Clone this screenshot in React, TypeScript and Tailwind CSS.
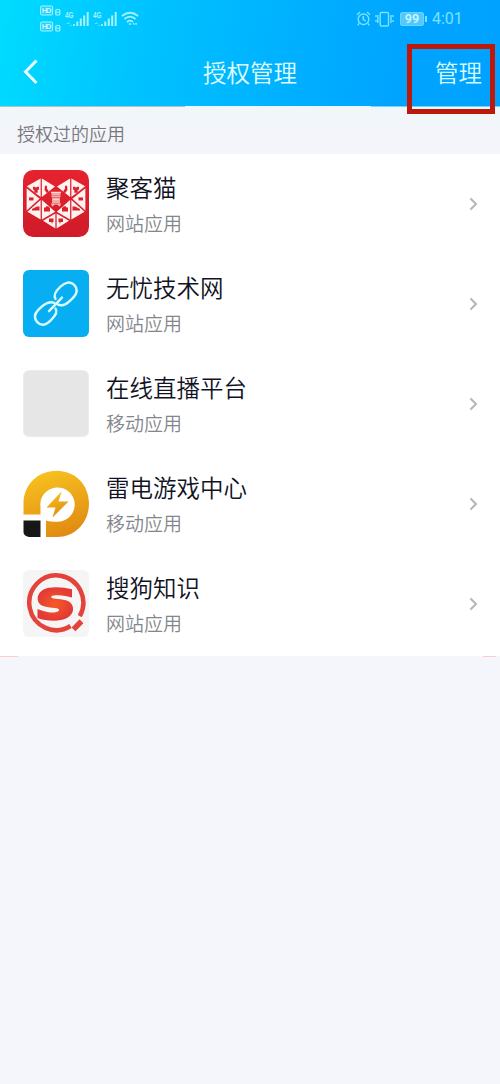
import type { ReactNode } from "react";

function HeartIcon() {
  const half = (
    <g>
      <path d="M3.800 16 17.600 8.400V26.600Z" />
      <path d="M18.900 8.400 32 16.200 18.900 26.600Z" />
      <path d="M3.600 18V39.800L16.600 28.400Z" />
      <path d="M4.400 41.200 17.600 29.600V48.800Z" />
      <path d="M18.900 29.600 32.200 41.200 18.900 48.800Z" />
      <path d="M20 50 32.400 42.800V57.600Z" />
      <g fill="#d8222c">
        <path d="M10 16.500h2l1 1 1-1h2v3h-1.300v3h-3.400v-3H10Z" />
        <path d="M22 15.500h2v3l1.500 2v2h-2l-2-3Z" />
        <path d="M6 27h4.500v3H6Z" />
        <path d="M9 38.500l5-2.500h2.500v4H9Z" />
        <path d="M21 37h1.500l.8-1.200h2l.8 1.200H27v4h-6Z" />
        <path d="M26 47.800h4.500v3.400h-1v1.300h-1v-1.300H26Z" />
      </g>
    </g>
  );
  return (
    <svg viewBox="0 0 66 66" preserveAspectRatio="none" className="h-[67px] w-[66px]">
      <defs>
        <linearGradient id="heartBg" x1="0" y1="0" x2="0" y2="1">
          <stop offset="0" stopColor="#e6232e" />
          <stop offset="1" stopColor="#cf1b29" />
        </linearGradient>
      </defs>
      <rect width="66" height="66" rx="10" fill="url(#heartBg)" />
      <g fill="#fff1ef">
        {half}
        <g transform="translate(66 0) scale(-1 1)">{half}</g>
      </g>
      <path d="M28.500 22.500h9v2.500h-9ZM29 27h8v5.500h-8Z" fill="#f3aaa6" />
      <path d="M28 22h10M28.500 25.800h9M28 33.500h10M30.500 29h5M29 35.500l2-2M37 35.500l-2-2" fill="none" stroke="#fbdad7" strokeWidth="1.100" />
    </svg>
  );
}

function LinkIcon() {
  return (
    <svg viewBox="0 0 66 66" preserveAspectRatio="none" className="h-[67px] w-[66px]">
      <rect width="66" height="66" rx="6" fill="#08aef2" />
      <g fill="none" stroke="#d9fbff" strokeWidth="2.400" strokeLinecap="round">
        <path d="M32.500 28.500C29.500 24 34 19.500 37.500 16.300C42 12 47.500 10.800 51 14.500C55.500 19 54 23.500 50 27.500C45 32.500 40.500 36.500 34.500 33.800" />
        <path d="M32.500 38C35.500 42 31 46.500 28 49.300C23.500 53.800 18.500 55.500 14.500 51.500C10.500 47.500 11.500 43 15.500 39C20 34.300 25.500 29.600 31.500 32.500" />
        <path d="M26 40.500 39 27.200" />
      </g>
    </svg>
  );
}

function BlankIcon() {
  return <div className="h-[67px] w-[66px] rounded-md border border-[#ececec] bg-[#e6e6e6]" />;
}

function ThunderIcon() {
  return (
    <svg viewBox="0 0 66 67" className="h-[67px] w-[66px]">
      <defs>
        <linearGradient id="thunder" x1="0.2" y1="0" x2="0.5" y2="1">
          <stop offset="0" stopColor="#f8c320" />
          <stop offset="1" stopColor="#e18b12" />
        </linearGradient>
      </defs>
      <path
        fill="url(#thunder)"
        d="M.5 44.500V33.500C.5 14.500 15 .7 33.500 .7S66 14.500 66 33.500 52 67 34.500 67H23V50.500C27 51.700 30 51.800 34 51.800A17.200 17.200 0 1 0 17.500 37V44.500Z"
      />
      <path fill="url(#thunder)" d="M38.500 21.500 23.500 37.500H32.500L29.500 47.500 45.500 31.500H35.500Z" />
      <path fill="#171717" d="M.5 50.500H17.500V67H6Q.5 66 .5 62Z" />
    </svg>
  );
}

function SogouIcon() {
  return (
    <svg viewBox="0 0 66 66" preserveAspectRatio="none" className="h-[67px] w-[66px]">
      <defs>
        <radialGradient id="sogou">
          <stop offset="0" stopColor="#f65a28" />
          <stop offset="1" stopColor="#e33a35" />
        </radialGradient>
      </defs>
      <rect width="66" height="66" rx="6" fill="#f5f5f6" />
      <path d="M47.500 55.200A27 27 0 1 1 56.800 45.500" fill="none" stroke="#e3433b" strokeWidth="4.500" />
      <path d="M50.500 58.500 58.500 50.500" stroke="#e3433b" strokeWidth="5.500" />
      <path
        d="M49 19C42 17.300 33 16.300 26 17.500C13.500 19.500 11.500 31.500 19.500 35.300C25 37.800 35 36.800 36 39C36.500 41.500 32 42.300 27 41.800C22 41.300 18 40 14.500 38.500V47.300C21 49.800 31 50.600 38 49.300C51.500 47 53.500 35 45 30.500C39.500 27.800 29.500 29 28.300 27C27.800 25.200 31 24.600 35 24.800C40 25 45 25.800 49 27Z"
        fill="url(#sogou)"
      />
    </svg>
  );
}

function Signal() {
  return (
    <svg viewBox="0 0 25 18" className="h-[18px] w-[25px]" fill="#a5f3ff">
      <text x="0" y="8" fontSize="9.500" fontWeight="700" fontFamily="Liberation Sans" textLength="8.500" lengthAdjust="spacingAndGlyphs">
        4G
      </text>
      <path d="M8 14h1.700v2H8ZM11.300 11.500h2v4.500h-2ZM14.800 8.500h2v7.500h-2ZM18.200 5.500h2v10.500h-2ZM21.700 2h2V16h-2Z" />
      <path d="M1.500 13.500h3M3 12l1.500 1.500M5 15.500H7" stroke="#6be0ff" strokeWidth="0.8" />
    </svg>
  );
}

function HdBadges() {
  return (
    <svg viewBox="0 0 22 28" className="h-7 w-[22px]" fontFamily="Liberation Sans" fontWeight="700">
      {[1, 17].map((y) => (
        <g key={y}>
          <rect x="0.6" y={y} width="12" height="9" rx="1" fill="#2bd2ff" stroke="#a5f3ff" />
          <text x="1.700" y={y + 7.200} fontSize="7.500" fill="#c2f8ff" textLength="9.800">
            HD
          </text>
          <rect x="15.800" y={y + 3.500} width="4" height="5.500" rx="1" fill="none" stroke="#a5f3ff" strokeWidth="1.200" />
          <path d={"M16 " + (y + 6.200) + "h3.500"} stroke="#a5f3ff" strokeWidth="1" />
        </g>
      ))}
    </svg>
  );
}

function StatusBar() {
  return (
    <div className="flex h-[38px] items-start justify-between pl-10 pr-9">
      <div className="flex items-start">
        <div className="pt-[5px]">
          <HdBadges />
        </div>
        <div className="flex gap-[3px] pl-[3px] pt-[10px]">
          <Signal />
          <Signal />
        </div>
        <svg viewBox="0 0 18 15" className="ml-[3px] mt-[11px] h-[15px] w-[18px]" fill="none" stroke="#a5f3ff" strokeWidth="1.700">
          <path d="M1 5Q9-1.500 17 5M3.500 8Q9 3.300 14.500 8M6 11Q9 8.300 12 11" />
          <path d="M7.800 13h2.400M12 12.800h1.300M14.300 12.800h1.500" />
        </svg>
      </div>
      <div className="flex items-start pt-[9px]">
        <svg viewBox="0 0 16 18" className="mt-px h-[18px] w-4" fill="none" stroke="#79e3ff" strokeWidth="1.400">
          <circle cx="7.500" cy="9.300" r="5.300" />
          <path d="M7.300 6v3.500l2.500 1.500M1 4.800 4 2M11 2l3 2.800M3 13.500l-1.300 1.800M12 13.500l1.300 1.800" />
        </svg>
        <svg viewBox="0 0 20 18" className="ml-[3px] mt-px h-[18px] w-5" fill="none" stroke="#79e3ff" strokeWidth="1.400">
          <rect x="5.200" y="2.500" width="8.300" height="13.500" rx="1.200" />
          <path d="M2.800 5v8M1 5v2M1 10v2M16 5v8M18 5v2M18 10v2" />
        </svg>
        <div className="ml-[5px] mt-[3px] flex h-[14px] w-6 items-center justify-center rounded-[2px] border border-[#65d6ff] bg-[#52c8ff] font-['Roboto'] text-[12.500px] font-semibold leading-none text-[#c8f7ff]">
          99
        </div>
        <div className="ml-px mt-[7px] h-[6px] w-[2px] bg-[#79e3ff]" />
        <div className="ml-[5px] w-8 whitespace-nowrap font-['Roboto'] text-[16px] font-normal leading-5 text-[#79e3ff]">4:01</div>
      </div>
    </div>
  );
}

interface AppRow {
  name: string;
  kind: string;
  icon: ReactNode;
}

const apps: AppRow[] = [
  { name: "聚客猫", kind: "网站应用", icon: <HeartIcon /> },
  { name: "无忧技术网", kind: "网站应用", icon: <LinkIcon /> },
  { name: "在线直播平台", kind: "移动应用", icon: <BlankIcon /> },
  { name: "雷电游戏中心", kind: "移动应用", icon: <ThunderIcon /> },
  { name: "搜狗知识", kind: "网站应用", icon: <SogouIcon /> },
];

export default function App() {
  return (
    <div className="flex h-[1084px] w-[500px] flex-col overflow-hidden bg-[#f4f6fb] font-['Noto_Sans_CJK_SC',sans-serif] font-[350]">
      <header className="h-[107px] shrink-0 bg-[linear-gradient(100deg,#00dcff_0%,#00c3ff_28%,#00afff_60%,#00a4ff_80%,#00a2ff_100%)]">
        <StatusBar />
        <div className="grid h-[68px] grid-cols-[1fr_auto_1fr] items-center">
          <svg viewBox="0 0 16 26" className="ml-[23px] h-[26px] w-4" fill="none" stroke="#eaffff" strokeWidth="3">
            <path d="M13.500 1.500 2.500 12.700 13.500 24" />
          </svg>
          <h1 className="text-[23.500px] leading-8 text-[#e0ffff]">授权管理</h1>
          <div className="relative justify-self-end pr-[18px] text-[23.500px] leading-8 text-[#d4fcff]">
            管理
            <div className="absolute -top-[12px] right-[5px] h-[70px] w-[88px] border-[5px] border-[#bd1809]" />
          </div>
        </div>
        <div className="flex h-px">
          <div className="w-[185px] bg-[#b9bccf]" />
          <div className="w-[186px] bg-[#eef8fc]" />
          <div className="flex-1 bg-[#74d3fb]" />
        </div>
      </header>
      <div className="h-[47px] shrink-0 bg-[linear-gradient(#f0f7f9,#f3f5fa_60%)] pl-[17px] pt-[13px] text-[18px] leading-[26px] text-[#77777b]">
        授权过的应用
      </div>
      <main className="flex h-[502px] shrink-0 flex-col bg-white">
        {apps.map((app) => (
          <div key={app.name} className="flex h-[100px] shrink-0 items-start pl-[23px] pr-[22px] pt-4">
            {app.icon}
            <div className="-mt-px ml-[17px] flex-1">
              <div className="text-[23.500px] leading-9 text-[#11131f]">{app.name}</div>
              <div className="text-[19px] leading-9 text-[#85868c]">{app.kind}</div>
            </div>
            <svg viewBox="0 0 9 14" className="mt-[27px] h-[14px] w-[9px]" fill="none" stroke="#b5b5b8" strokeWidth="2">
              <path d="M1.500 1.500 7 7 1.500 12.500" />
            </svg>
          </div>
        ))}
      </main>
      <div className="flex h-px shrink-0 justify-between">
        <div className="w-[18px] bg-[#ffc9ce]" />
        <div className="mr-1 w-[13px] bg-[#ffc9ce]" />
      </div>
    </div>
  );
}
